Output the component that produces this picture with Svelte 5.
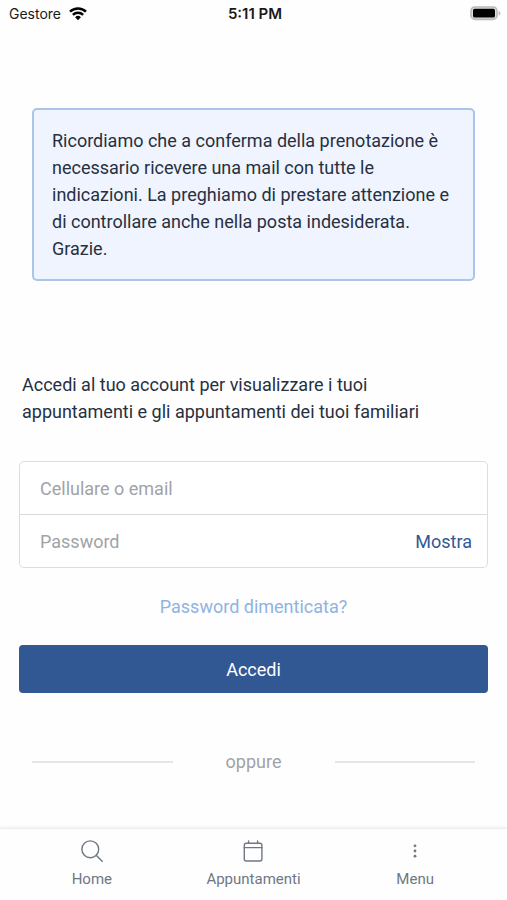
<script lang="ts">
	let login = $state('');
	let password = $state('');
	let visible = $state(false);

	function submit(e: Event) {
		e.preventDefault();
	}
</script>

<div class="screen">
	<header class="status-bar">
		<div class="carrier">
			Gestore
			<svg width="18" height="14" viewBox="0 0 18 14" aria-hidden="true">
				<g fill="none" stroke="#000" stroke-width="2.5">
					<path d="M1 4.6a11.6 11.6 0 0 1 16 0" />
					<path d="M3.9 7.9a7.4 7.4 0 0 1 10.2 0" />
				</g>
				<path d="M9 13.2 6.1 10.2a4.2 4.2 0 0 1 5.8 0z" />
			</svg>
		</div>
		<div class="time">5:11 PM</div>
		<svg class="battery" width="31" height="15" viewBox="0 0 31 15" aria-hidden="true">
			<rect x="1" y="1" width="26" height="12.4" rx="4" fill="#ddd" stroke="#b9b9b9" stroke-width="1.6" />
			<rect x="3" y="2.8" width="22" height="8.8" rx="1.6" />
			<path d="M28.6 5c2.4.6 2.4 4 0 4.6z" fill="#b9b9b9" />
		</svg>
	</header>

	<main>
		<p class="notice">
			Ricordiamo che a conferma della prenotazione è necessario ricevere una mail con tutte le
			indicazioni. La preghiamo di prestare attenzione e di controllare anche nella posta
			indesiderata. Grazie.
		</p>

		<p class="intro">
			Accedi al tuo account per visualizzare i tuoi appuntamenti e gli appuntamenti dei tuoi familiari
		</p>

		<form onsubmit={submit}>
			<div class="fields">
				<div class="field">
					<input
						type="text"
						autocomplete="username"
						placeholder="Cellulare o email"
						aria-label="Cellulare o email"
						bind:value={login}
					/>
				</div>
				<div class="field">
					<input
						type={visible ? 'text' : 'password'}
						autocomplete="current-password"
						placeholder="Password"
						aria-label="Password"
						bind:value={password}
					/>
					<button type="button" class="toggle" onclick={() => (visible = !visible)}>
						{visible ? 'Nascondi' : 'Mostra'}
					</button>
				</div>
			</div>

			<a class="forgot" href="#password">Password dimenticata?</a>
			<button type="submit" class="submit">Accedi</button>
		</form>

		<div class="divider">oppure</div>
	</main>

	<nav>
		<a href="#home">
			<svg width="24" height="24" viewBox="0 0 24 24" aria-hidden="true">
				<circle cx="10.3" cy="10.3" r="8.4" />
				<path d="m16.2 16.2 6 6" />
			</svg>
			Home
		</a>
		<a href="#appuntamenti">
			<svg width="24" height="24" viewBox="0 0 24 24" aria-hidden="true">
				<rect x="3.3" y="4.2" width="17.6" height="17.8" rx="2" />
				<path d="M3.3 8.6h17.6M7.6 2v2.2M16.6 2v2.2" />
			</svg>
			Appuntamenti
		</a>
		<a href="#menu">
			<svg width="24" height="24" viewBox="0 0 24 24" aria-hidden="true">
				<g class="dots">
					<circle cx="12" cy="6.8" r="1.4" />
					<circle cx="12" cy="12" r="1.4" />
					<circle cx="12" cy="17.2" r="1.4" />
				</g>
			</svg>
			Menu
		</a>
	</nav>
</div>

<style>
	:global(body) {
		margin: 0;
		background: #fefefe;
	}

	.screen {
		min-height: 100vh;
		display: flex;
		flex-direction: column;
		font-family: Roboto, sans-serif;
		font-size: 18px;
		line-height: 27px;
		color: #27303f;
	}

	/* ── Status bar ── */
	.status-bar {
		display: grid;
		grid-template-columns: 1fr auto 1fr;
		align-items: center;
		height: 27px;
		padding: 0 6px 0 9px;
		font-family: Inter, sans-serif;
		font-size: 14px;
		color: #1a1a1a;
	}
	.carrier {
		display: flex;
		align-items: center;
		gap: 8px;
	}
	.time {
		font-size: 15px;
		font-weight: 600;
	}
	.battery {
		justify-self: end;
	}

	/* ── Content ── */
	main {
		flex: 1;
		padding: 81px 19px 40px;
	}
	p {
		margin: 0;
	}
	.notice {
		margin: 0 13px;
		padding: 17px 18px;
		border: 2px solid #a9c6ea;
		border-radius: 5px;
		background: #eff4fe;
	}
	.intro {
		margin-top: 90px;
		padding: 0 32px 0 3px;
	}

	form {
		display: flex;
		flex-direction: column;
		margin-top: 36px;
	}
	.fields {
		border: 1px solid #dcdddf;
		border-radius: 5px;
		background: #fff;
	}
	.field {
		display: flex;
		align-items: center;
		height: 52px;
		padding: 0 15px 0 20px;
	}
	.field + .field {
		border-top: 1px solid #d9dadc;
	}
	input {
		flex: 1;
		min-width: 0;
		padding: 0;
		border: 0;
		outline: none;
		background: transparent;
		font: inherit;
		color: inherit;
	}
	input::placeholder {
		color: #a0a3a7;
		opacity: 1;
	}
	button {
		border: 0;
		font: inherit;
		cursor: pointer;
	}
	.toggle {
		padding: 0;
		background: none;
		color: #325893;
	}
	.forgot {
		align-self: center;
		margin: 25px 0;
		color: #8fb3e2;
		text-decoration: none;
	}
	.submit {
		height: 48px;
		border-radius: 4px;
		background: #325893;
		color: #fff;
	}

	.divider {
		display: grid;
		grid-template-columns: 1fr 162px 1fr;
		align-items: center;
		margin: 55px 13px 0;
		text-align: center;
		color: #a0a3a7;
	}
	.divider::before,
	.divider::after {
		content: '';
		height: 2px;
		background: #e3e5e8;
	}

	/* ── Bottom tabs ── */
	nav {
		position: sticky;
		bottom: 0;
		display: grid;
		grid-template-columns: repeat(3, 1fr);
		padding: 0 11px;
		border-top: 1px solid #eeeeee;
		background: #fefefe;
		box-shadow: 0 -1px 3px rgba(0, 0, 0, 0.06);
	}
	nav a {
		display: flex;
		flex-direction: column;
		align-items: center;
		gap: 6px;
		padding: 10px 0 11px;
		font-size: 15px;
		line-height: 20px;
		color: #6f7785;
		text-decoration: none;
	}
	nav svg {
		fill: none;
		stroke: #6f7785;
		stroke-width: 1.4;
		stroke-linecap: round;
	}
	nav .dots {
		fill: #6f7785;
		stroke: none;
	}
</style>
